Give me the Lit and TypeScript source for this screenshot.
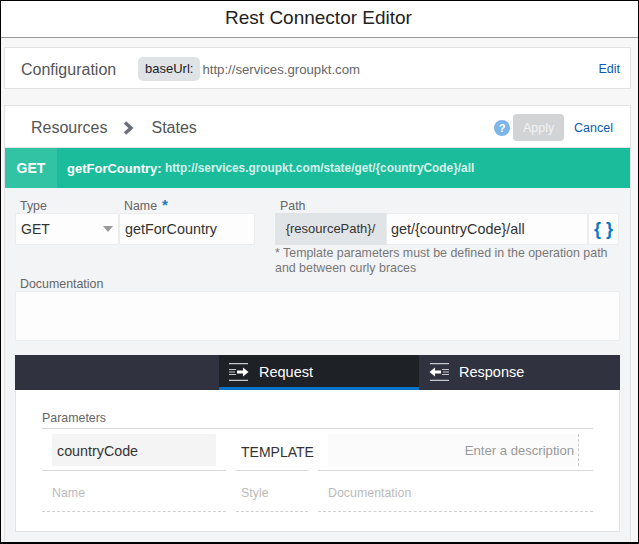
import { LitElement, html, css } from 'lit';
import { customElement } from 'lit/decorators.js';

@customElement('app-root')
export class AppRoot extends LitElement {
  static styles = css`
    :host {
      display: block;
      width: 639px;
      height: 544px;
      overflow: hidden;
      box-sizing: border-box;
      border: 1px solid #000;
      border-bottom-width: 2px;
      background: #f7f7f7;
      font-family: 'Liberation Sans', Arial, sans-serif;
      color: #333;
    }
    .title {
      height: 37px;
      box-sizing: border-box;
      background: #fff;
      border-bottom: 1px solid #999;
      padding-right: 2px;
      text-align: center;
      font-size: 19px;
      line-height: 34px;
      color: #222;
    }
    .config {
      margin: 9px 7px 0 3px;
      height: 42px;
      box-sizing: border-box;
      background: #fff;
      border: 1px solid #e3e3e3;
      display: flex;
      align-items: center;
      padding: 2px 10px 0 16px;
    }
    .config-label {
      font-size: 16px;
      line-height: 20px;
      padding-top: 1px;
      color: #555;
      width: 117px;
    }
    .chip {
      background: #e0e3e6;
      border-radius: 5px;
      height: 24px;
      line-height: 24px;
      padding: 0 7px;
      font-size: 13px;
      color: #222;
      margin-right: 3px;
    }
    .config-url {
      font-size: 13.2px;
      margin-left: -1px;
      color: #666;
      flex: 1;
    }
    a {
      color: #0a5bb0;
      font-size: 12.5px;
    }
    .main {
      margin: 16px 7px 0 3px;
      border: 1px solid #e3e3e3;
      border-bottom: none;
      background: #f3f4f6;
      height: 438px;
      box-sizing: border-box;
    }
    .crumbs {
      height: 42px;
      box-sizing: border-box;
      background: #fff;
      border-bottom: 1px solid #e3e3e3;
      display: flex;
      align-items: center;
      padding: 2px 17px 0 26px;
      font-size: 16px;
      color: #555;
    }
    .crumbs svg {
      margin: 0 17px 0 16px;
    }
    .spacer {
      flex: 1;
    }
    .help {
      width: 16px;
      height: 16px;
      border-radius: 50%;
      background: #7cb5e8;
      color: #fff;
      font-size: 11px;
      font-weight: 700;
      text-align: center;
      line-height: 16px;
      margin-right: 3px;
    }
    .apply {
      width: 51px;
      height: 27px;
      line-height: 28px;
      text-align: center;
      background: #d2d3d5;
      color: #f2f2f2;
      border-radius: 4px;
      font-size: 12.5px;
      margin-right: 10px;
    }
    .method {
      height: 40px;
      background: #1bbc9b;
      display: flex;
      align-items: center;
      color: #fff;
      font-weight: 700;
    }
    .verb {
      width: 52px;
      height: 40px;
      line-height: 40px;
      background: #32c3a5;
      text-align: center;
      font-size: 14px;
      margin-right: 10px;
    }
    .op {
      font-size: 13px;
    }
    .op-url {
      font-size: 11.85px;
      color: #d5f3ec;
    }
    .form {
      display: flex;
      padding: 0 10px;
    }
    .field-label {
      font-size: 12.4px;
      color: #666;
      height: 15px;
      line-height: 17px;
      margin-left: 5px;
    }
    .star {
      color: #1a7cb8;
      font-size: 15px;
      font-weight: 700;
      margin-left: 5px;
      line-height: 10px;
    }
    .type-col {
      margin-top: 10px;
      width: 104px;
    }
    .name-col {
      margin-top: 10px;
      width: 136px;
    }
    .box {
      height: 32px;
      box-sizing: border-box;
      background: #fdfdfe;
      border: 1px solid #ebecee;
      border-radius: 2px;
      display: flex;
      align-items: center;
      font-size: 14.4px;
      color: #333;
      padding: 0 5px;
    }
    .type-box {
      font-size: 14px;
    }
    .caret {
      margin-left: auto;
      width: 0;
      height: 0;
      border-left: 5px solid transparent;
      border-right: 5px solid transparent;
      border-top: 6px solid #999;
    }
    .path-col {
      margin-top: 10px;
      margin-left: 20px;
      width: 344px;
    }
    .path-row {
      display: flex;
    }
    .prefix {
      width: 111px;
      height: 32px;
      line-height: 32px;
      background: #e0e4e6;
      font-size: 13px;
      text-align: center;
      color: #333;
    }
    .path-input {
      flex: 1;
      padding-left: 4px;
    }
    .braces {
      width: 31px;
      justify-content: center;
      padding: 0;
      color: #0a78c8;
      font-weight: 700;
      font-size: 18px;
    }
    .hint {
      font-size: 12.4px;
      line-height: 15px;
      color: #777;
      margin-top: 1px;
    }
    .doc {
      padding: 0 10px;
    }
    .doc-box {
      height: 50px;
      box-sizing: border-box;
      background: #fdfdfe;
      border: 1px solid #ebecee;
      border-radius: 2px;
    }
    .tabs {
      margin: 14px 10px 0;
      height: 35px;
      background: #30323f;
      display: flex;
      padding-left: 204px;
    }
    .tab {
      width: 200px;
      box-sizing: border-box;
      display: flex;
      align-items: center;
      padding: 1px 0 0 10px;
      border-bottom: 3px solid transparent;
      gap: 10px;
      color: #fff;
      font-size: 14.5px;
    }
    .tab.active {
      background: #1e2226;
      border-bottom-color: #0a72c8;
    }
    .panel {
      margin: 0 10px;
      height: 142px;
      box-sizing: border-box;
      background: #fff;
      border: 1px solid #e3e3e3;
      border-top: none;
      padding: 20px 26px 0;
    }
    .params-title {
      font-size: 12.4px;
      height: 14px;
      line-height: 16px;
      color: #666;
      padding-bottom: 4px;
      border-bottom: 1px solid #d8d8d8;
    }
    .row {
      display: grid;
      grid-template-columns: 184px 72px 1fr;
      column-gap: 10px;
    }
    .cell {
      height: 42px;
      box-sizing: border-box;
      border-bottom: 1px solid #d8d8d8;
      padding-top: 5px;
      font-size: 14px;
      color: #333;
    }
    .name-cell {
      height: 32px;
      width: 164px;
      margin-left: 10px;
      background: #f4f4f4;
      border-radius: 2px;
      line-height: 34px;
      font-size: 14.3px;
      padding-left: 5px;
      box-sizing: border-box;
    }
    .style-cell {
      line-height: 36px;
      padding-left: 5px;
      white-space: nowrap;
    }
    .desc-wrap {
      height: 32px;
      background: #fbfbfb;
      border-right: 1px dashed #ccc;
      line-height: 34px;
      text-align: right;
      padding-right: 4px;
      color: #999;
      font-size: 13.1px;
      margin-left: 10px;
      margin-right: 14px;
    }
    .foot {
      height: 41px;
      box-sizing: border-box;
      border-bottom: 1px dashed #d0d0d0;
      font-size: 12.4px;
      line-height: 45px;
      color: #bbb;
      padding-left: 10px;
    }
    .foot.style {
      padding-left: 5px;
    }
  `;

  render() {
    return html`
      <div class="title">Rest Connector Editor</div>
      <div class="config">
        <span class="config-label">Configuration</span>
        <span class="chip">baseUrl:</span>
        <span class="config-url">http://services.groupkt.com</span>
        <a>Edit</a>
      </div>
      <div class="main">
        <div class="crumbs">
          <span>Resources</span>
          <svg width="11" height="14" viewBox="0 0 11 14">
            <path d="M2 1.5 L8 7 L2 12.5" fill="none" stroke="#6b6f78" stroke-width="3.4" />
          </svg>
          <span>States</span>
          <span class="spacer"></span>
          <span class="help">?</span>
          <span class="apply">Apply</span>
          <a>Cancel</a>
        </div>
        <div class="method">
          <span class="verb">GET</span>
          <span class="op">getForCountry:</span>
          <span class="op-url">&nbsp;http://services.groupkt.com/state/get/{countryCode}/all</span>
        </div>
        <div class="form">
          <div class="type-col">
            <div class="field-label">Type</div>
            <div class="box type-box">GET<span class="caret"></span></div>
          </div>
          <div class="name-col">
            <div class="field-label">Name<span class="star">*</span></div>
            <div class="box">getForCountry</div>
          </div>
          <div class="path-col">
            <div class="field-label">Path</div>
            <div class="path-row">
              <div class="prefix">{resourcePath}/</div>
              <div class="box path-input">get/{countryCode}/all</div>
              <div class="box braces">{ }</div>
            </div>
            <div class="hint">* Template parameters must be defined in the operation path<br />and between curly braces</div>
          </div>
        </div>
        <div class="doc">
          <div class="field-label">Documentation</div>
          <div class="doc-box"></div>
        </div>
        <div class="tabs">
          <div class="tab active">
            <svg width="20" height="18" viewBox="0 0 20 18">
              <path d="M0 .7H19M0 17.3H19M0 6.5H7M0 9H6M0 11.5H7" stroke="#c8c8cc" stroke-width="1.2" fill="none" />
              <path d="M8 7.5H14V4.5L19.5 9L14 13.5V10.5H8Z" fill="#fff" />
            </svg>
            <span>Request</span>
          </div>
          <div class="tab">
            <svg width="20" height="18" viewBox="0 0 20 18">
              <path d="M1 .7H20M1 17.3H20M13 6.5H20M14 9H20M13 11.5H20" stroke="#c8c8cc" stroke-width="1.2" fill="none" />
              <path d="M12 7.5H6V4.5L.5 9L6 13.5V10.5H12Z" fill="#fff" />
            </svg>
            <span>Response</span>
          </div>
        </div>
        <div class="panel">
          <div class="params-title">Parameters</div>
          <div class="row">
            <div class="cell"><div class="name-cell">countryCode</div></div>
            <div class="cell style-cell">TEMPLATE</div>
            <div class="cell"><div class="desc-wrap">Enter a description</div></div>
          </div>
          <div class="row">
            <div class="foot">Name</div>
            <div class="foot style">Style</div>
            <div class="foot">Documentation</div>
          </div>
        </div>
      </div>
    `;
  }
}
